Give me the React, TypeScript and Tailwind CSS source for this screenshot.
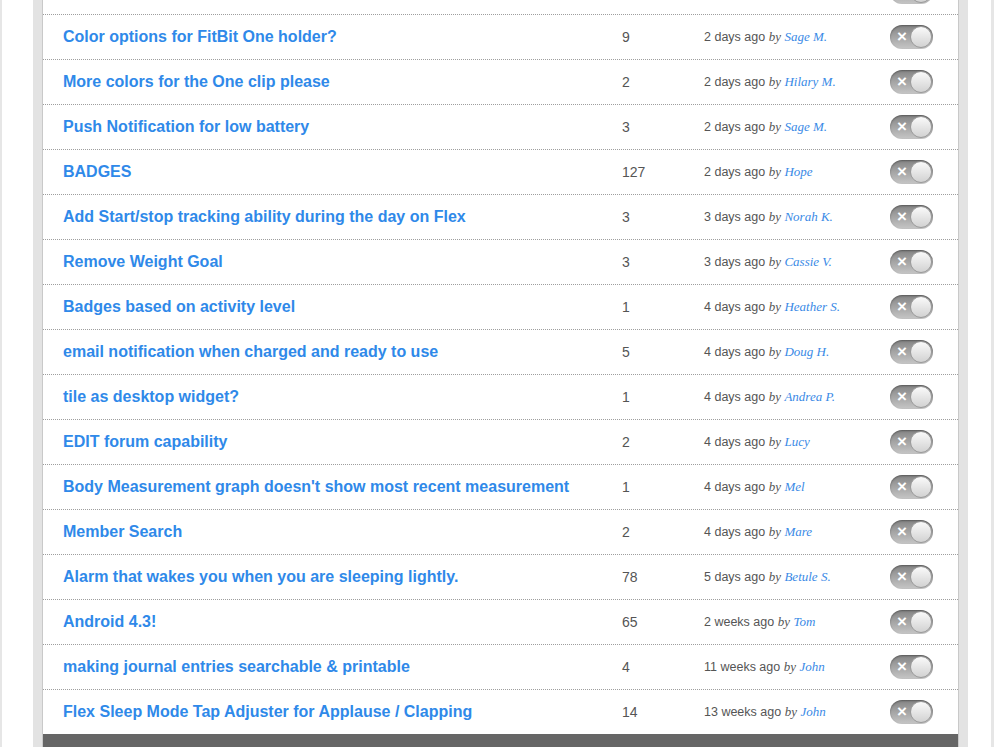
import React from "react";

type Idea = {
  title: string;
  votes: number | null;
  when: string;
  author: string;
};

// first entry is the row that is scrolled mostly out of view
const ideas: Idea[] = [
  { title: "", votes: null, when: "", author: "" },
  { title: "Color options for FitBit One holder?", votes: 9, when: "2 days ago", author: "Sage M." },
  { title: "More colors for the One clip please", votes: 2, when: "2 days ago", author: "Hilary M." },
  { title: "Push Notification for low battery", votes: 3, when: "2 days ago", author: "Sage M." },
  { title: "BADGES", votes: 127, when: "2 days ago", author: "Hope" },
  { title: "Add Start/stop tracking ability during the day on Flex", votes: 3, when: "3 days ago", author: "Norah K." },
  { title: "Remove Weight Goal", votes: 3, when: "3 days ago", author: "Cassie V." },
  { title: "Badges based on activity level", votes: 1, when: "4 days ago", author: "Heather S." },
  { title: "email notification when charged and ready to use", votes: 5, when: "4 days ago", author: "Doug H." },
  { title: "tile as desktop widget?", votes: 1, when: "4 days ago", author: "Andrea P." },
  { title: "EDIT forum capability", votes: 2, when: "4 days ago", author: "Lucy" },
  { title: "Body Measurement graph doesn't show most recent measurement", votes: 1, when: "4 days ago", author: "Mel" },
  { title: "Member Search", votes: 2, when: "4 days ago", author: "Mare" },
  { title: "Alarm that wakes you when you are sleeping lightly.", votes: 78, when: "5 days ago", author: "Betule S." },
  { title: "Android 4.3!", votes: 65, when: "2 weeks ago", author: "Tom" },
  { title: "making journal entries searchable & printable", votes: 4, when: "11 weeks ago", author: "John" },
  { title: "Flex Sleep Mode Tap Adjuster for Applause / Clapping", votes: 14, when: "13 weeks ago", author: "John" },
];

const Toggle = ({ mark = true }: { mark?: boolean }) => (
  <div className="relative h-[24px] w-[43px] rounded-full bg-gradient-to-b from-[#858585] to-[#c6c6c6] shadow-[inset_0_1px_2px_rgba(0,0,0,0.35)]">
    {mark && (
      <span className="absolute left-[7px] top-[2px] text-[17px] font-bold leading-[20px] text-white">
        ×
      </span>
    )}
    <span className="absolute right-[1px] top-[1px] h-[22px] w-[22px] rounded-full border border-[#9a9a9a] bg-gradient-to-b from-[#fafafa] to-[#d2d2d2]" />
  </div>
);

const App = () => {
  return (
    <div className="flex h-[747px] w-full overflow-hidden bg-white font-['Liberation_Sans',Arial,sans-serif]">
      <div className="w-[2px] bg-[#e6e6e6]" />
      <div className="w-[31px]" />
      <div className="flex w-[935px] border-x-[9px] border-[#e3e3e3]">
        <div className="flex flex-1 flex-col border-x border-[#c9c9c9] bg-white">
          <div className="-mt-[30px] flex-1">
            {ideas.map((idea, i) => {
              const last = i === ideas.length - 1;
              return (
                <div
                  key={i}
                  className={
                    last
                      ? "grid h-[44px] grid-cols-[559px_82px_186px_auto] items-center pl-5"
                      : "grid h-[45px] grid-cols-[559px_82px_186px_auto] items-center border-b border-dotted border-[#9e9e9e] pl-5"
                  }
                >
                  <a className="text-[16px] font-bold text-[#2f89e9]">{idea.title}</a>
                  <span className="text-[14px] text-[#555]">{idea.votes}</span>
                  <span className="text-[12.5px] text-[#555]">
                    {idea.when && (
                      <>
                        {idea.when}{" "}
                        <span className="font-['Liberation_Serif',serif] text-[13px] italic">by</span>{" "}
                        <a className="font-['Liberation_Serif',serif] text-[13px] italic text-[#3a8ae6]">
                          {idea.author}
                        </a>
                      </>
                    )}
                  </span>
                  <Toggle mark={i > 0} />
                </div>
              );
            })}
          </div>
          <div className="h-[13px] bg-[#666]" />
        </div>
      </div>
      <div className="w-[23px]" />
      <div className="w-[3px] bg-[#e6e6e6]" />
    </div>
  );
};

export default App;
